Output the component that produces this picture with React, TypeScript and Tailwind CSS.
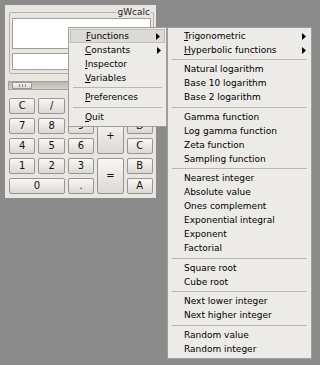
import React from "react";

const FONT = "font-['DejaVu_Sans','Bitstream_Vera_Sans',sans-serif]";

function Arrow() {
  return (
    <svg width="4" height="7" viewBox="0 0 4 7" className="shrink-0">
      <path d="M0 0 L4 3.5 L0 7 Z" fill="#000" />
    </svg>
  );
}

type Item =
  | { sep: true }
  | { sep?: false; label: string; mn?: boolean; sub?: boolean; active?: boolean };

const mainItems: Item[] = [
  { label: "Functions", mn: true, sub: true, active: true },
  { label: "Constants", mn: true, sub: true },
  { label: "Inspector", mn: true },
  { label: "Variables", mn: true },
  { sep: true },
  { label: "Preferences", mn: true },
  { sep: true },
  { label: "Quit", mn: true },
];

const subItems: Item[] = [
  { label: "Trigonometric", mn: true, sub: true },
  { label: "Hyperbolic functions", mn: true, sub: true },
  { sep: true },
  { label: "Natural logarithm" },
  { label: "Base 10 logarithm" },
  { label: "Base 2 logarithm" },
  { sep: true },
  { label: "Gamma function" },
  { label: "Log gamma function" },
  { label: "Zeta function" },
  { label: "Sampling function" },
  { sep: true },
  { label: "Nearest integer" },
  { label: "Absolute value" },
  { label: "Ones complement" },
  { label: "Exponential integral" },
  { label: "Exponent" },
  { label: "Factorial" },
  { sep: true },
  { label: "Square root" },
  { label: "Cube root" },
  { sep: true },
  { label: "Next lower integer" },
  { label: "Next higher integer" },
  { sep: true },
  { label: "Random value" },
  { label: "Random integer" },
];

function Menu({ items, className }: { items: Item[]; className: string }) {
  return (
    <div
      className={`absolute flex flex-col pt-[1px] pb-[2px] bg-[#edebe8] border border-[#a19d98] ${className}`}
    >
      {items.map((it, i) =>
        it.sep ? (
          <div key={i} className="h-[5.5px] flex items-center px-[4px]">
            <div className="w-full border-t border-[#bab6b0]" />
          </div>
        ) : (
          <div key={i} className="h-[14px] px-[1px] flex">
            <div
              className={`flex-1 flex items-center pl-[15px] pr-[4px] ${
                it.active ? "bg-[#dcdad6] border border-[#c2beb9] pl-[14px] pr-[3px]" : ""
              }`}
            >
              <span className="flex-1 text-[9px] leading-none text-black whitespace-nowrap">
                {it.mn ? (
                  <>
                    <u className="underline-offset-[1px]">{it.label[0]}</u>
                    {it.label.slice(1)}
                  </>
                ) : (
                  it.label
                )}
              </span>
              {it.sub && <Arrow />}
            </div>
          </div>
        )
      )}
    </div>
  );
}

// keys hidden under the open menu are left without a label
const keys: { k: string; cls?: string }[] = [
  { k: "C" },
  { k: "/" },
  { k: "" },
  { k: "" },
  { k: "" },
  { k: "7" },
  { k: "8" },
  { k: "9" },
  { k: "+", cls: "row-span-2" },
  { k: "D" },
  { k: "4" },
  { k: "5" },
  { k: "6" },
  { k: "C" },
  { k: "1" },
  { k: "2" },
  { k: "3" },
  { k: "=", cls: "row-span-2" },
  { k: "B" },
  { k: "0", cls: "col-span-2" },
  { k: "." },
  { k: "A" },
];

export default function App() {
  return (
    <div className={`relative w-[320px] h-[365px] overflow-hidden bg-[#8b8b8b] ${FONT}`}>
      {/* calculator window */}
      <div className="absolute left-[5px] top-[5px] w-[151px] h-[193px] bg-[#e9e6e2] flex flex-col pl-[4px] pt-[7px]">
        {/* display frame */}
        <div className="relative w-[145px] h-[62px] border border-[#b3afaa] rounded-[2px] flex flex-col gap-[4px] pl-[2px] pt-[5px]">
          <span className="absolute right-[2px] -top-[6px] bg-[#e9e6e2] px-[1px] text-[9px] leading-[11px] text-[#222]">
            gWcalc
          </span>
          <div className="w-[139px] h-[31px] bg-white border border-[#a39f99]" />
          <div className="w-[139px] h-[17px] bg-white border border-[#a39f99]" />
        </div>

        {/* slider */}
        <div className="mt-[7px] -ml-[1px] w-[146px] h-[9px] bg-gradient-to-b from-[#b9b6b1] to-[#d3d0cb] border border-[#a5a19c] flex items-center pl-[3px]">
          <div className="w-[20px] h-[7px] bg-gradient-to-b from-[#f7f6f4] to-[#dcd9d4] border border-[#9c9893] flex items-center justify-center gap-[2px]">
            <span className="w-px h-[3px] bg-[#8a8681]" />
            <span className="w-px h-[3px] bg-[#8a8681]" />
            <span className="w-px h-[3px] bg-[#8a8681]" />
          </div>
        </div>

        {/* keypad */}
        <div className="mt-[8px] w-[144px] grid grid-cols-5 auto-rows-[16px] gap-x-[3px] gap-y-[4px]">
          {keys.map((b, i) => (
            <div
              key={i}
              className={`flex items-center justify-center rounded-[2px] border border-[#98948f] bg-gradient-to-b from-[#f8f7f5] to-[#dcd9d4] text-[10px] leading-none text-[#111] ${b.cls ?? ""}`}
            >
              {b.k}
            </div>
          ))}
        </div>
      </div>

      <Menu items={mainItems} className="left-[68px] top-[27px] w-[99px]" />
      <Menu items={subItems} className="left-[167px] top-[27px] w-[145px]" />
    </div>
  );
}
